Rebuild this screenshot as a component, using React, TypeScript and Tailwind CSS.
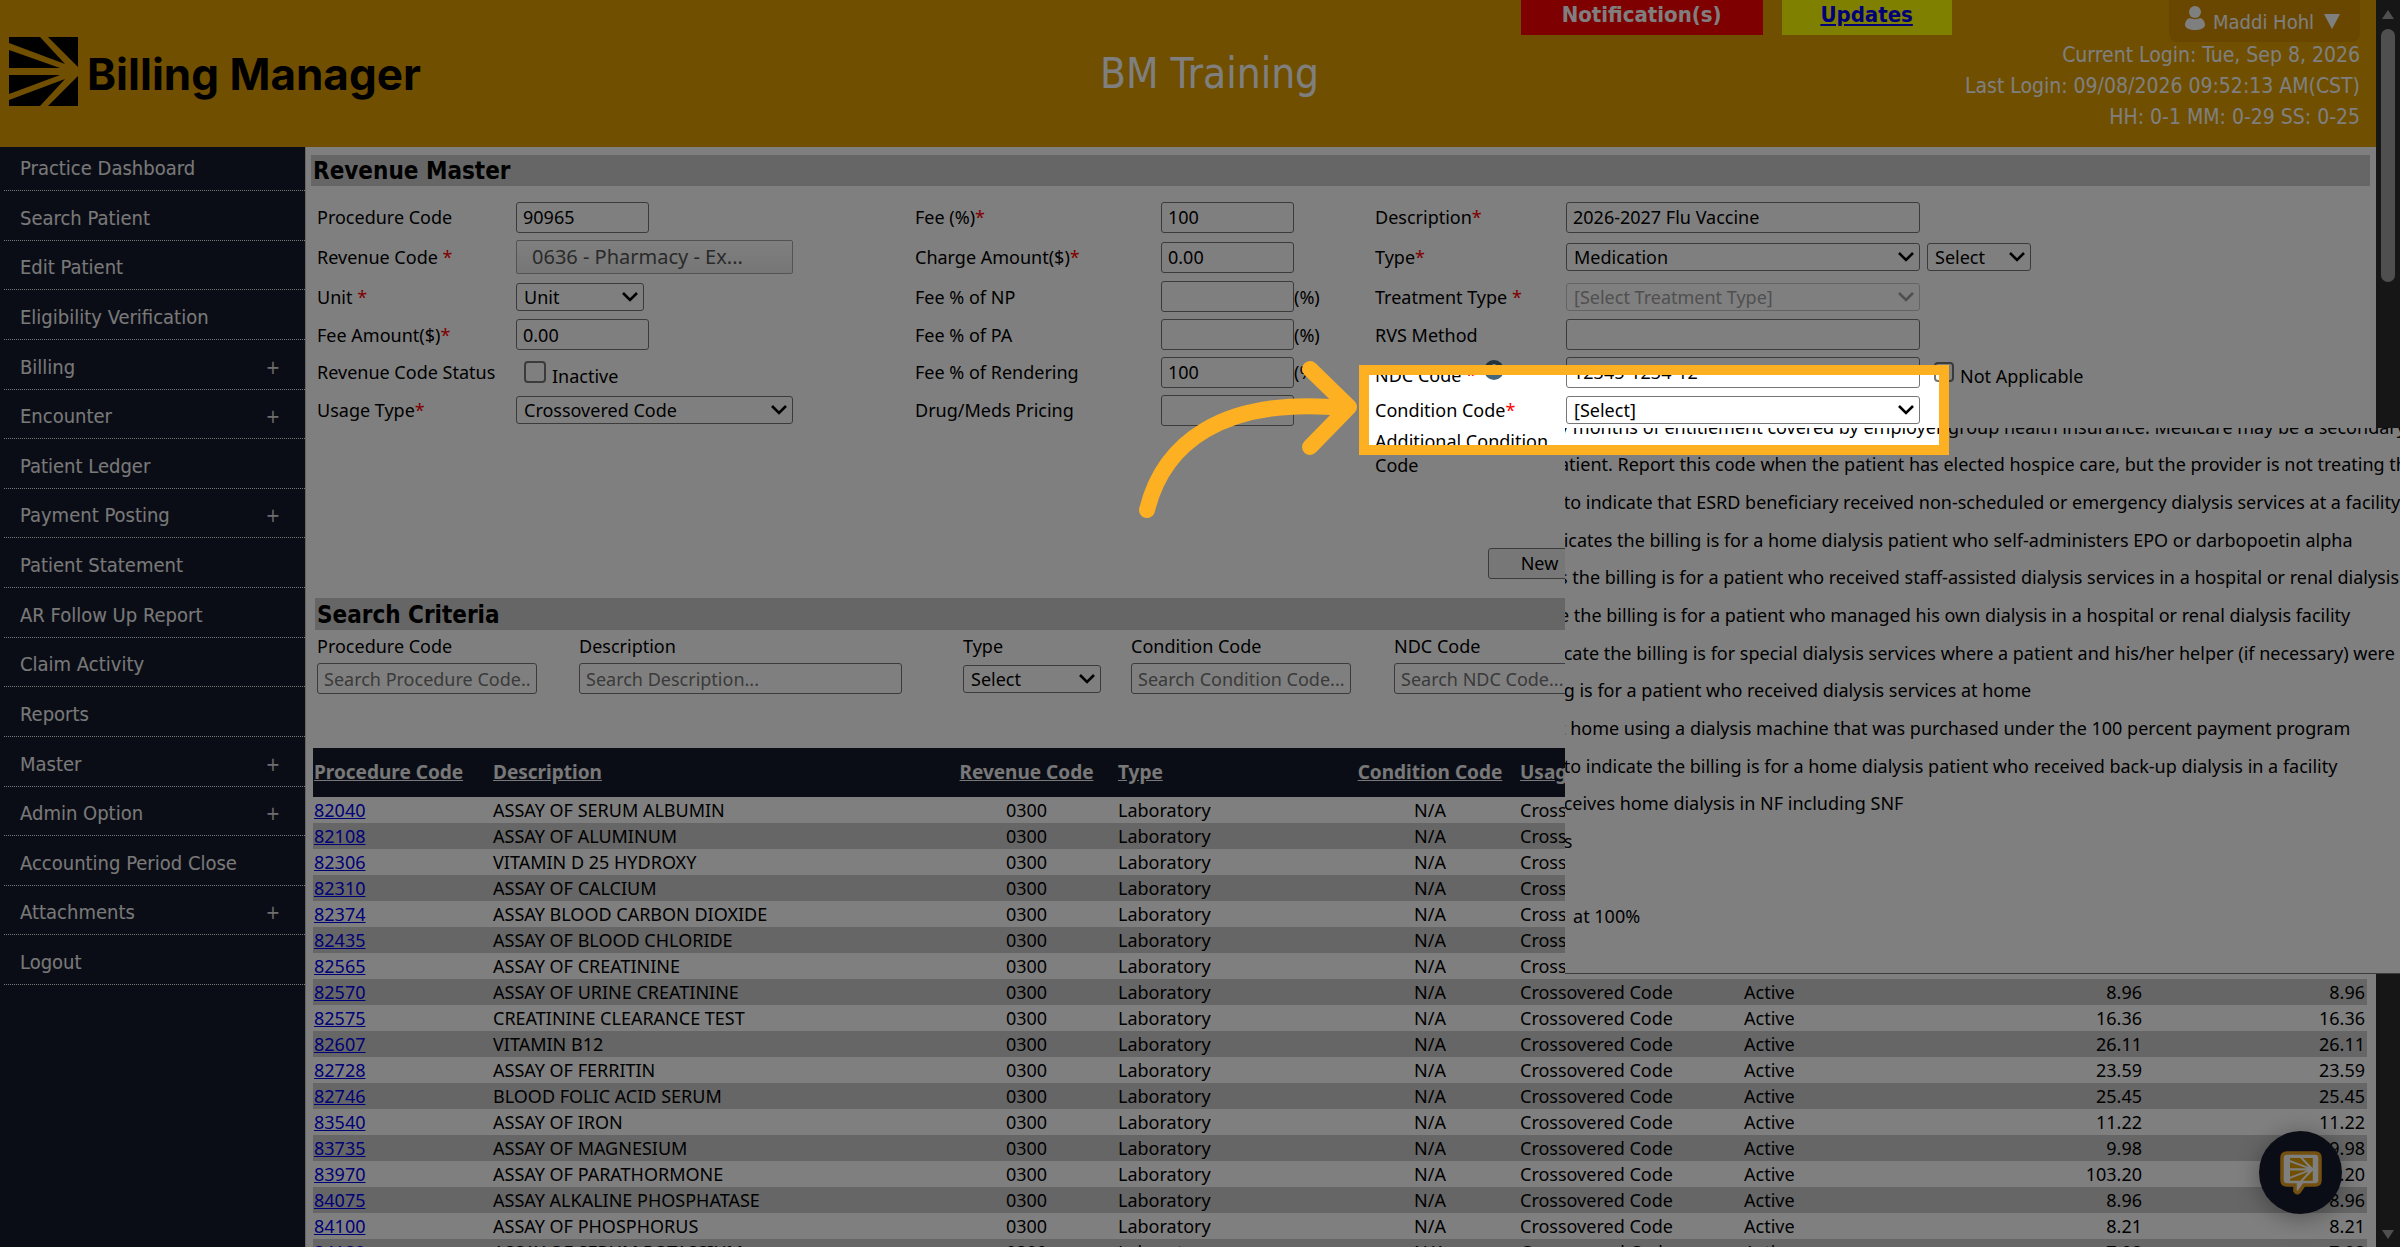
import React from 'react';

const BODY = "font-['Noto_Sans','DejaVu_Sans',sans-serif]";
const TAHOMA = "font-['DejaVu_Sans_Condensed','DejaVu_Sans',sans-serif]";

const menu: [string, boolean][] = [
  ['Practice Dashboard', false],
  ['Search Patient', false],
  ['Edit Patient', false],
  ['Eligibility Verification', false],
  ['Billing', true],
  ['Encounter', true],
  ['Patient Ledger', false],
  ['Payment Posting', true],
  ['Patient Statement', false],
  ['AR Follow Up Report', false],
  ['Claim Activity', false],
  ['Reports', false],
  ['Master', true],
  ['Admin Option', true],
  ['Accounting Period Close', false],
  ['Attachments', true],
  ['Logout', false],
];

const procedures: [string, string, string][] = [
  ['82040', 'ASSAY OF SERUM ALBUMIN', '8.21'],
  ['82108', 'ASSAY OF ALUMINUM', '25.45'],
  ['82306', 'VITAMIN D 25 HYDROXY', '29.60'],
  ['82310', 'ASSAY OF CALCIUM', '8.96'],
  ['82374', 'ASSAY BLOOD CARBON DIOXIDE', '8.21'],
  ['82435', 'ASSAY OF BLOOD CHLORIDE', '8.21'],
  ['82565', 'ASSAY OF CREATININE', '8.96'],
  ['82570', 'ASSAY OF URINE CREATININE', '8.96'],
  ['82575', 'CREATININE CLEARANCE TEST', '16.36'],
  ['82607', 'VITAMIN B12', '26.11'],
  ['82728', 'ASSAY OF FERRITIN', '23.59'],
  ['82746', 'BLOOD FOLIC ACID SERUM', '25.45'],
  ['83540', 'ASSAY OF IRON', '11.22'],
  ['83735', 'ASSAY OF MAGNESIUM', '9.98'],
  ['83970', 'ASSAY OF PARATHORMONE', '103.20'],
  ['84075', 'ASSAY ALKALINE PHOSPHATASE', '8.96'],
  ['84100', 'ASSAY OF PHOSPHORUS', '8.21'],
  ['84132', 'ASSAY OF SERUM POTASSIUM', '7.98'],
];

const conditionOptions = [
  'y months of entitlement covered by employer group health insurance. Medicare may be a secondary',
  'atient. Report this code when the patient has elected hospice care, but the provider is not treating the terminal',
  '\u00a0to indicate that ESRD beneficiary received non-scheduled or emergency dialysis services at a facility',
  '\u00a0icates the billing is for a home dialysis patient who self-administers EPO or darbopoetin alpha',
  's the billing is for a patient who received staff-assisted dialysis services in a hospital or renal dialysis facility',
  'e the billing is for a patient who managed his own dialysis in a hospital or renal dialysis facility',
  'icate the billing is for special dialysis services where a patient and his/her helper (if necessary) were',
  '\u00a0g is for a patient who received dialysis services at home',
  't home using a dialysis machine that was purchased under the 100 percent payment program',
  '\u00a0to indicate the billing is for a home dialysis patient who received back-up dialysis in a facility',
  '\u00a0ceives home dialysis in NF including SNF',
  '\u00a0s',
  '\u00a0',
  '\u00a0\u00a0\u00a0at 100%',
  '\u00a0',
];

function Burst({ className }: { className: string }) {
  return (
    <svg viewBox="0 0 69 69" className={className} fill="currentColor" aria-hidden="true">
      <path d="M0 0H31L56 27L0 6Z" />
      <path d="M39 0H69V30Z" />
      <path d="M0 13L51 31H0Z" />
      <path d="M0 38H51L0 57Z" />
      <path d="M56 42L31 69H0V63Z" />
      <path d="M69 39V69H39Z" />
    </svg>
  );
}

function Req({ children, htmlFor, space, className = '' }: { children: React.ReactNode; htmlFor: string; space?: boolean; className?: string }) {
  return (
    <label htmlFor={htmlFor} className={className}>
      {children}
      {space ? ' ' : ''}
      <span className="text-[#ff0000]">*</span>
    </label>
  );
}

function Box({ id, value, className }: { id: string; value?: string; className: string }) {
  return (
    <input
      id={id}
      type="text"
      defaultValue={value}
      className={`h-[31px] rounded-[3px] border border-[#767676] bg-white px-1.5 text-black ${className}`}
    />
  );
}

function Search({ id, placeholder, className }: { id: string; placeholder: string; className: string }) {
  return (
    <input
      id={id}
      type="text"
      placeholder={placeholder}
      className={`h-[31px] rounded-[3px] border border-[#767676] bg-white px-1.5 placeholder:text-[#757575] ${className}`}
    />
  );
}

function Select({ id, value, className, disabled, label }: { id: string; value: string; className: string; disabled?: boolean; label?: string }) {
  return (
    <span className={`relative inline-flex ${className} ${disabled ? 'text-[#a0a0a0]' : 'text-black'}`}>
      <select
        id={id}
        disabled={disabled}
        aria-label={label}
        className={`h-7 w-full appearance-none rounded-[3px] border bg-white pl-[7px] leading-6 ${disabled ? 'border-[#c8c8c8]' : 'border-[#767676]'}`}
      >
        <option>{value}</option>
      </select>
      <svg viewBox="0 0 16 10" className="pointer-events-none absolute top-[9px] right-1.5 h-2.5 w-4" fill="none" stroke="currentColor" strokeWidth="2.6" aria-hidden="true">
        <path d="M1 1L8 8L15 1" />
      </svg>
    </span>
  );
}

function Header() {
  return (
    <header className={`grid h-[147px] shrink-0 grid-cols-[46.3%_17.7%_auto_1fr] bg-[#e09e00] ${TAHOMA}`}>
      <div className="flex items-center pt-0.5 pb-1.5 pl-[9px]">
        <Burst className="size-[69px] text-black" />
        <span className="mt-1 ml-[9px] font-[Inter,sans-serif] text-[44px] leading-none font-bold text-black">Billing Manager</span>
      </div>
      <h1 className="pt-12 text-[42px] leading-[52px] text-white">BM Training</h1>
      <div className="flex items-start gap-[19px]">
        <button type="button" className="h-[35px] w-[242px] bg-[#ff0000] pb-1.5 text-[22px] leading-none font-bold text-white">
          Notification(s)
        </button>
        <a href="#updates" className="h-[35px] w-[170px] bg-[#ffff00] pt-0.5 text-center text-[22px] leading-[26px] font-bold text-[#0000ee] underline">
          Updates
        </a>
      </div>
      <div className="flex flex-col items-end pr-4 text-[21px] leading-[31px] text-white">
        <button type="button" className="flex h-[42px] w-[191px] items-center rounded-b-lg bg-[#d48f00] pl-4">
          <svg viewBox="0 0 20 24" className="mr-2 mb-1.5 h-6 w-5" fill="currentColor" aria-hidden="true">
            <ellipse cx="10" cy="6" rx="6" ry="6" />
            <path d="M0 19c0-4 3-7 5-7 1.500 1.500 8.500 1.500 10 0 2 0 5 3 5 7 0 3-5 5-10 5S0 22 0 19Z" />
          </svg>
          <span className="pt-0.5 text-[20px]">Maddi Hohl</span>
          <svg viewBox="0 0 16 15" className="ml-2.5 h-[15px] w-4" fill="currentColor" aria-hidden="true">
            <path d="M0 0H16L8 15Z" />
          </svg>
        </button>
        <p className="-mt-0.5">Current Login: Tue, Sep 8, 2026</p>
        <p>Last Login: 09/08/2026 09:52:13 AM(CST)</p>
        <p>HH: 0-1 MM: 0-29 SS: 0-25</p>
      </div>
    </header>
  );
}

function Sidebar() {
  return (
    <nav className={`w-[306px] shrink-0 border-r border-[#cccccc] bg-[#161a2c] ${TAHOMA}`}>
      <ul className="grid h-[838px] grid-rows-[44px_repeat(16,1fr)] pl-1">
        {menu.map(([name, more]) => (
          <li key={name} className="flex items-end border-b border-dotted border-[#f0f0f0]">
            <a href="#menu" className="flex w-full justify-between pr-[25px] pb-2 pl-4 text-[20px] leading-7 text-[#f2f2f2]">
              {name}
              {more && <span className="text-[19px] text-[#dcdcdc]">+</span>}
            </a>
          </li>
        ))}
      </ul>
    </nav>
  );
}

function RevenueForm() {
  return (
    <form className="mt-[11px] ml-[11px] grid grid-cols-[199px_399px_246px_214px_191px_1fr] grid-rows-[40px_40px_39px_37px_38px_38px_48px] items-center leading-6">
      <label htmlFor="proc">Procedure Code</label>
      <Box id="proc" value="90965" className="w-[133px]" />
      <Req htmlFor="fee">Fee (%)</Req>
      <Box id="fee" value="100" className="w-[133px]" />
      <Req htmlFor="desc">Description</Req>
      <Box id="desc" value="2026-2027 Flu Vaccine" className="w-[354px]" />

      <Req htmlFor="rev" space>Revenue Code</Req>
      <button id="rev" type="button" className="h-[34px] w-[277px] rounded-[2px] border border-[#a6a6a6] bg-linear-to-b from-white to-[#ececec] pl-[15px] text-left text-[20px] text-[#555555]">
        0636 - Pharmacy - Ex...
      </button>
      <Req htmlFor="charge">Charge Amount($)</Req>
      <Box id="charge" value="0.00" className="w-[133px]" />
      <Req htmlFor="type">Type</Req>
      <div className="flex gap-[7px]">
        <Select id="type" value="Medication" className="w-[354px]" />
        <Select id="subtype" label="Subtype" value="Select" className="w-[104px]" />
      </div>

      <Req htmlFor="unit" space>Unit</Req>
      <Select id="unit" value="Unit" className="w-[128px]" />
      <label htmlFor="np">Fee % of NP</label>
      <div className="flex items-center"><Box id="np" className="w-[133px]" />(%)</div>
      <Req htmlFor="treat" space>Treatment Type</Req>
      <Select id="treat" value="[Select Treatment Type]" className="w-[354px]" disabled />

      <Req htmlFor="amount">Fee Amount($)</Req>
      <Box id="amount" value="0.00" className="w-[133px]" />
      <label htmlFor="pa">Fee % of PA</label>
      <div className="flex items-center"><Box id="pa" className="w-[133px]" />(%)</div>
      <label htmlFor="rvs">RVS Method</label>
      <Box id="rvs" className="w-[354px]" />

      <span>Revenue Code Status</span>
      <div className="flex items-center gap-1.5 pl-2">
        <input id="inactive" type="checkbox" className="size-[22px] appearance-none rounded border-2 border-[#767676] bg-white" />
        <label htmlFor="inactive" className="pt-2">Inactive</label>
      </div>
      <label htmlFor="rendering">Fee % of Rendering</label>
      <div className="flex items-center"><Box id="rendering" value="100" className="w-[133px]" />(%)</div>
      <div className="flex items-center">
        <Req htmlFor="ndc" space className="pt-1.5">NDC Code</Req>
        <svg viewBox="0 0 20 20" className="mb-1 ml-2 size-5" aria-hidden="true">
          <circle cx="10" cy="10" r="10" fill="#44667c" />
          <path d="M8 8H11.500V15H8ZM8.500 4H11.500V6.500H8.500Z" fill="#ffffff" />
        </svg>
      </div>
      <div className="flex items-center">
        <Box id="ndc" value="12345-1234-12" className="w-[354px]" />
        <input id="na" type="checkbox" className="mr-1.5 ml-3.5 size-5 appearance-none rounded border-2 border-[#767676] bg-white" />
        <label htmlFor="na" className="pt-2">Not Applicable</label>
      </div>

      <Req htmlFor="usage">Usage Type</Req>
      <Select id="usage" value="Crossovered Code" className="w-[277px]" />
      <label htmlFor="drug">Drug/Meds Pricing</label>
      <Box id="drug" className="w-[133px]" />
      <Req htmlFor="cond">Condition Code</Req>
      <Select id="cond" value="[Select]" className="w-[354px]" />

      <span className="col-start-5">Additional Condition Code</span>
    </form>
  );
}

function SearchCriteria() {
  return (
    <div className="ml-[11px] grid grid-cols-[262px_384px_168px_263px_1fr] grid-rows-[33px_31px] items-center">
      <label htmlFor="s-proc">Procedure Code</label>
      <label htmlFor="s-desc">Description</label>
      <label htmlFor="s-type">Type</label>
      <label htmlFor="s-cond">Condition Code</label>
      <label htmlFor="s-ndc">NDC Code</label>
      <Search id="s-proc" placeholder="Search Procedure Code..." className="w-[220px]" />
      <Search id="s-desc" placeholder="Search Description..." className="w-[323px]" />
      <Select id="s-type" value="Select" className="w-[138px]" />
      <Search id="s-cond" placeholder="Search Condition Code..." className="w-[220px]" />
      <Search id="s-ndc" placeholder="Search NDC Code..." className="w-[220px]" />
    </div>
  );
}

function ProcedureTable() {
  const head = (t: string) => <a href="#sort" className="underline">{t}</a>;
  return (
    <div className="mt-[54px] mr-[9px] ml-[7px]">
      <table className="w-full table-fixed">
        <colgroup>
          <col className="w-[178px]" />
          <col className="w-[446px]" />
          <col className="w-[179px]" />
          <col className="w-[226px]" />
          <col className="w-[176px]" />
          <col className="w-[224px]" />
          <col className="w-[202px]" />
          <col className="w-[200px]" />
          <col />
        </colgroup>
        <thead>
          <tr className={`h-[49px] bg-[#161a2c] text-left text-[19px] text-[#f0f0f0] ${BODY}`}>
            <th className="px-px font-bold">{head('Procedure Code')}</th>
            <th className="px-0.5 font-bold">{head('Description')}</th>
            <th className="px-0.5 text-center font-bold">{head('Revenue Code')}</th>
            <th className="px-0.5 font-bold">{head('Type')}</th>
            <th className="px-0.5 text-center font-bold">{head('Condition Code')}</th>
            <th className="px-0.5 font-bold">{head('Usage Type')}</th>
            <th className="px-0.5 font-bold">{head('Status')}</th>
            <th className="px-0.5 text-right font-bold">{head('Fee')}</th>
            <th className="px-0.5 text-right font-bold">{head('Charge')}</th>
          </tr>
        </thead>
        <tbody>
          {procedures.map(([code, name, fee]) => (
            <tr key={code} className="h-[26px] leading-[26px] even:bg-[#cccccc]">
              <td className="px-px"><a href="#code" className="text-[#0000ee] underline">{code}</a></td>
              <td className="px-0.5">{name}</td>
              <td className="px-0.5 text-center">0300</td>
              <td className="px-0.5">Laboratory</td>
              <td className="px-0.5 text-center">N/A</td>
              <td className="px-0.5">Crossovered Code</td>
              <td className="px-0.5">Active</td>
              <td className="px-0.5 text-right">{fee}</td>
              <td className="px-0.5 text-right">{fee}</td>
            </tr>
          ))}
        </tbody>
      </table>
    </div>
  );
}

function Scrollbar() {
  return (
    <div className="flex w-6 shrink-0 flex-col items-center bg-[#2c2c2c] pt-2.5 pb-2">
      <svg viewBox="0 0 12 9" className="h-[9px] w-3" fill="#9f9f9f" aria-hidden="true"><path d="M6 0L12 9H0Z" /></svg>
      <div className="mt-2.5 h-[253px] w-3.5 rounded-full bg-[#9f9f9f]" />
      <svg viewBox="0 0 12 9" className="mt-auto h-[9px] w-3" fill="#9f9f9f" aria-hidden="true"><path d="M0 0H12L6 9Z" /></svg>
    </div>
  );
}

export default function App() {
  return (
    <div className={`relative flex h-screen overflow-hidden bg-white text-[18px] text-black ${BODY}`}>
      <div className="flex min-w-0 flex-1 flex-col">
        <Header />
        <div className="flex min-h-0 flex-1">
          <Sidebar />
          <main className="min-w-0 flex-1 overflow-hidden">
            <h2 className={`mt-2 mr-1.5 ml-[5px] bg-[#cccccc] pt-0.5 pl-0.5 text-[24px] leading-[29px] font-bold ${TAHOMA}`}>Revenue Master</h2>
            <RevenueForm />
            <div className="mt-[71px] pl-[1182px]">
              <button type="button" className="block h-[31px] w-[103px] rounded-[3px] border border-[#767676] bg-[#efefef]">New</button>
            </div>
            <h2 className={`mt-[19px] mr-1.5 ml-[9px] bg-[#cccccc] pt-0.5 pl-0.5 text-[24px] leading-[30px] font-bold ${TAHOMA}`}>Search Criteria</h2>
            <SearchCriteria />
            <ProcedureTable />
          </main>
        </div>
      </div>
      <Scrollbar />

      <button type="button" aria-label="Open chat" className="absolute right-[58px] bottom-[33px] flex size-[83px] items-center justify-center rounded-full bg-[#161a2c] shadow-[0_4px_24px_rgba(0,0,0,0.35)]">
        <svg viewBox="0 0 42 44" className="h-11 w-[42px]" aria-hidden="true">
          <path d="M7 2H35Q40 2 40 7V29Q40 34 35 34H24L19 41Q17 43 15 40V34H7Q2 34 2 29V7Q2 2 7 2Z" fill="#ffffff" stroke="#e8a020" strokeWidth="3.500" />
          <g fill="#e09e00" transform="translate(10 7) scale(.33)">
            <path d="M0 0H31L56 27L0 6ZM39 0H69V30ZM0 13L51 31H0ZM0 38H51L0 57ZM56 42L31 69H0V63ZM69 39V69H39Z" />
          </g>
        </svg>
      </button>

      <div className="absolute top-[428px] right-0 left-[1565px] flex h-[546px] items-end overflow-hidden border-b border-[#767676] bg-white">
        <ul className="-ml-1.5 grid h-[565px] shrink-0 grid-rows-[repeat(15,1fr)] items-center leading-6 whitespace-nowrap">
          {conditionOptions.map((text, i) => (
            <li key={i}>{text}</li>
          ))}
        </ul>
      </div>

      <div className="pointer-events-none absolute top-[365px] left-[1359px] h-[90px] w-[590px] border-10 border-[#fdb022] shadow-[0_0_0_3000px_rgba(0,0,0,0.5)]" />
      <svg viewBox="0 0 220 160" className="pointer-events-none absolute top-[360px] left-[1138px] h-40 w-[220px]" fill="none" stroke="#fdb022" strokeWidth="16" strokeLinecap="round" strokeLinejoin="round" aria-hidden="true">
        <path d="M9 150C25 85 82 36 207 48" />
        <path d="M172 9L211 47L172 87" />
      </svg>
    </div>
  );
}
